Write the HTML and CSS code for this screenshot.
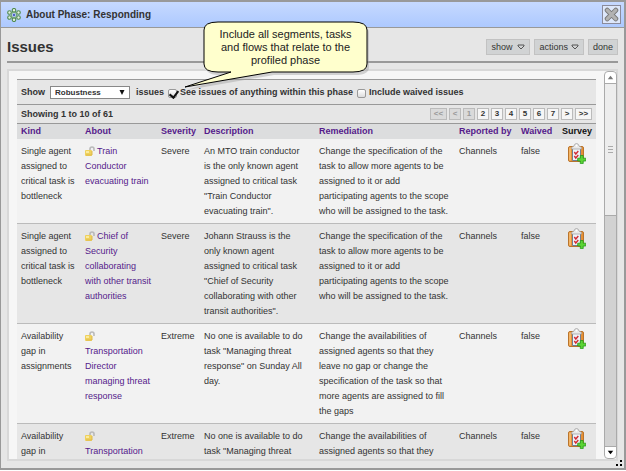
FILE: index.html
```
<!DOCTYPE html>
<html lang="en">
<head>
<meta charset="utf-8">
<title>About Phase: Responding</title>
<link rel="stylesheet" href="styles.css">
</head>
<body>
<svg class="defs" aria-hidden="true">
  <symbol id="lock" viewBox="0 0 10 10">
    <path d="M5 5V3q0-2 2-2t2 2v2" fill="none" stroke="#b9b9b9" stroke-width="1.6"/>
    <rect x="0" y="4" width="7" height="6" rx="1" fill="#efd15c"/>
    <path d="M1 5h3v2H1z" fill="#faeaa0"/>
    <path d="M1 9h6V5" fill="none" stroke="#ddb84a"/>
  </symbol>
  <symbol id="survey" viewBox="0 0 18 21">
    <rect x=".5" y="3.500" width="15" height="15" rx="1.500" fill="#e58f35" stroke="#b9742c"/>
    <path d="M2 4.500v13" stroke="#f9c277" stroke-width="1.500"/>
    <path d="M4.500 5h8v12.500h-8z" fill="#eef3f9" stroke="#6f7f93"/>
    <path d="M3.500 6V4.500L6 3q.5-2.500 2.500-2.500T11 3l2.500 1.500V6z" fill="#e9e9e9" stroke="#a5a5a5" stroke-width=".8"/>
    <circle cx="8.500" cy="2.700" r=".9" fill="#fff"/>
    <path d="M6.300 9l1.500 2L10.300 8M6.300 13l1.500 2 2.500-3" fill="none" stroke="#d32b35" stroke-width="1.400"/>
    <path d="M12.300 12.500h2.900v2.700h2.600V18h-2.600v2.600h-2.900V18H9.700v-2.800h2.600z" fill="#5bd435" stroke="#249b1b" stroke-width=".8"/>
  </symbol>
</svg>
<div class="window">
  <header class="titlebar">
    <svg class="app-icon" viewBox="0 0 14 14" aria-hidden="true">
      <g fill="#e3f0e0" stroke="#4f8a4d" stroke-width="1.100">
        <circle cx="7" cy="2.300" r="1.800"/><circle cx="11.500" cy="4.500" r="1.800"/><circle cx="11.500" cy="9.500" r="1.800"/>
        <circle cx="7" cy="11.700" r="1.800"/><circle cx="2.500" cy="9.500" r="1.800"/><circle cx="2.500" cy="4.500" r="1.800"/>
      </g>
      <circle cx="7" cy="7" r="2.800" fill="#b8cdec" stroke="#6ba36a"/>
      <circle cx="7" cy="7" r="1.200" fill="#4c5fc4"/>
    </svg>
    <span class="caption">About Phase: Responding</span>
    <button class="close" type="button" aria-label="Close">
      <svg viewBox="0 0 14 14" aria-hidden="true">
        <path d="M3 3l8 8M11 3l-8 8" stroke="#777" stroke-width="4.600" stroke-linecap="round"/>
        <path d="M3 3l8 8M11 3l-8 8" stroke="#b2b2b2" stroke-width="3" stroke-linecap="round"/>
      </svg>
    </button>
  </header>
  <main class="content">
    <div class="heading">
      <h1>Issues</h1>
      <div class="menus">
        <button type="button">show <svg class="down wide" viewBox="0 0 8 6" aria-hidden="true"><path d="M1 1h6v1L4 5 1 2z"/></svg></button>
        <button type="button">actions <svg class="down" viewBox="0 0 8 6" aria-hidden="true"><path d="M1 1h6v1L4 5 1 2z"/></svg></button>
        <button type="button">done</button>
      </div>
      <div class="callout" role="tooltip">
        <svg class="balloon" viewBox="0 0 230 76" aria-hidden="true">
          <path class="shadow" d="M57 2H192Q206 2 206 10V44Q206 52 192 52H111L24 67 70 52H57Q43 52 43 44V10Q43 2 57 2Z" transform="translate(2 3)"/>
          <path class="body" d="M57 2H192Q206 2 206 10V44Q206 52 192 52H111L24 67 70 52H57Q43 52 43 44V10Q43 2 57 2Z"/>
        </svg>
        <p>Include all segments, tasks<br>and flows that relate to the<br>profiled phase</p>
      </div>
    </div>
    <section class="panel">
      <div class="scroll">
        <form class="filters">
          <label for="kind">Show</label>
          <span class="picker">
            <select id="kind"><option>Robustness</option></select>
            <svg viewBox="0 0 6 6" aria-hidden="true"><path d="M0 0h6L3 6z"/></svg>
          </span>
          <span>issues</span>
          <input type="checkbox" id="within" checked><label for="within">See issues of anything within this phase</label>
          <input type="checkbox" id="waived"><label for="waived">Include waived issues</label>
        </form>
        <div class="paging">
          <span>Showing 1 to 10 of 61</span>
          <nav>
            <button type="button" class="far" disabled>&lt;&lt;</button><button type="button" disabled>&lt;</button><button type="button" disabled>1</button><button type="button">2</button><button type="button">3</button><button type="button">4</button><button type="button">5</button><button type="button">6</button><button type="button">7</button><button type="button">&gt;</button><button type="button" class="far">&gt;&gt;</button>
          </nav>
        </div>
        <table>
          <colgroup><col class="c-kind"><col class="c-about"><col class="c-severity"><col class="c-description"><col><col class="c-reported"><col class="c-waived"><col class="c-survey"></colgroup>
          <thead>
            <tr><th><a href="#">Kind</a></th><th><a href="#">About</a></th><th><a href="#">Severity</a></th><th><a href="#">Description</a></th><th><a href="#">Remediation</a></th><th><a href="#">Reported by</a></th><th><a href="#">Waived</a></th><th>Survey</th></tr>
          </thead>
          <tbody>
            <tr>
              <td>Single agent<br>assigned to<br>critical task is<br>bottleneck</td>
              <td><svg class="lock"><use href="#lock"/></svg><a href="#">Train<br>Conductor<br>evacuating train</a></td>
              <td>Severe</td>
              <td>An MTO train conductor<br>is the only known agent<br>assigned to critical task<br>"Train Conductor<br>evacuating train".</td>
              <td>Change the specification of the<br>task to allow more agents to be<br>assigned to it or add<br>participating agents to the scope<br>who will be assigned to the task.</td>
              <td>Channels</td><td>false</td>
              <td class="survey"><a href="#" aria-label="Survey"><svg><use href="#survey"/></svg></a></td>
            </tr>
            <tr>
              <td>Single agent<br>assigned to<br>critical task is<br>bottleneck</td>
              <td><svg class="lock"><use href="#lock"/></svg><a href="#">Chief of<br>Security<br>collaborating<br>with other transit<br>authorities</a></td>
              <td>Severe</td>
              <td>Johann Strauss is the<br>only known agent<br>assigned to critical task<br>"Chief of Security<br>collaborating with other<br>transit authorities".</td>
              <td>Change the specification of the<br>task to allow more agents to be<br>assigned to it or add<br>participating agents to the scope<br>who will be assigned to the task.</td>
              <td>Channels</td><td>false</td>
              <td class="survey"><a href="#" aria-label="Survey"><svg><use href="#survey"/></svg></a></td>
            </tr>
            <tr>
              <td>Availability<br>gap in<br>assignments</td>
              <td><svg class="lock"><use href="#lock"/></svg><br><a href="#">Transportation<br>Director<br>managing threat<br>response</a></td>
              <td>Extreme</td>
              <td>No one is available to do<br>task "Managing threat<br>response" on Sunday All<br>day.</td>
              <td>Change the availabilities of<br>assigned agents so that they<br>leave no gap or change the<br>specification of the task so that<br>more agents are assigned to fill<br>the gaps</td>
              <td>Channels</td><td>false</td>
              <td class="survey"><a href="#" aria-label="Survey"><svg><use href="#survey"/></svg></a></td>
            </tr>
            <tr>
              <td>Availability<br>gap in</td>
              <td><svg class="lock"><use href="#lock"/></svg><br><a href="#">Transportation</a></td>
              <td>Extreme</td>
              <td>No one is available to do<br>task "Managing threat</td>
              <td>Change the availabilities of<br>assigned agents so that they</td>
              <td>Channels</td><td>false</td>
              <td class="survey"><a href="#" aria-label="Survey"><svg><use href="#survey"/></svg></a></td>
            </tr>
          </tbody>
        </table>
      </div>
      <div class="scrollbar" aria-hidden="true">
        <svg class="up" viewBox="0 0 12 12"><path d="M3 8h6L6 4z"/></svg>
        <div class="thumb"><i></i><i></i><i></i></div>
        <div class="track"></div>
        <svg class="dn" viewBox="0 0 12 12"><path d="M3 4h6L6 8z"/></svg>
      </div>
    </section>
  </main>
  <svg class="grip" viewBox="0 0 6 6" aria-hidden="true"><path d="M4 0h2v2H4zM0 4h2v2H0zM4 4h2v2H4z"/></svg>
</div>
</body>
</html>
```
FILE: styles.css
```
* { box-sizing: border-box; }
body { margin: 0; background: #fff; font: 9px/15px "Liberation Sans", Arial, sans-serif; color: #333; }
button, input, select { font: inherit; color: inherit; margin: 0; }
a { color: #551a8b; text-decoration: none; }
.defs { position: absolute; width: 0; height: 0; }

.window {
  position: relative;
  display: flex;
  flex-direction: column;
  height: calc(100vh - 1px);
  border: 2px solid #999;
  border-left-width: 1px;
  background: #e6e6e6;
}
.titlebar {
  display: flex;
  flex: none;
  align-items: center;
  height: 26px;
  padding: 0 3px 0 6px;
  gap: 5px;
  background: linear-gradient(#c6d9ff, #adc9ff);
  border-bottom: 1px solid #999;
}
.app-icon { width: 14px; height: 14px; }
.caption { flex: 1; font-size: 10px; font-weight: bold; }
.close { width: 19px; height: 19px; padding: 1px; border: 1px solid #8b8b9b; background: #dde7fb; }
.close svg { display: block; width: 15px; height: 15px; }

.content { display: flex; flex-direction: column; flex: 1; min-height: 0; padding: 0 6px 7px; }
.heading {
  position: relative;
  display: flex;
  flex: none;
  justify-content: space-between;
  align-items: center;
  height: 35px;
  padding-top: 5px;
  border-bottom: 2px solid #999;
}
h1 { margin: 0; font-size: 15px; line-height: 20px; }
.menus { display: flex; gap: 4px; }
.menus button {
  display: flex;
  align-items: center;
  gap: 3px;
  height: 16px;
  padding: 0 4px;
  border: 1px solid #c2c2c2;
  background: #d1d3d4;
  font-size: 9px;
}
.down { width: 8px; height: 6px; fill: none; stroke: #555; }
.down.wide { margin-left: 2px; }

.callout { position: absolute; z-index: 2; left: 154px; top: -8px; width: 230px; height: 76px; }
.balloon { position: absolute; inset: 0; width: 100%; height: 100%; }
.balloon .body { fill: #ffffcd; stroke: #000; }
.balloon .shadow { fill: #999; fill-opacity: .4; }
.callout p { position: relative; margin: 8px 24px 0 43px; font-size: 11px; line-height: 13px; text-align: center; color: #222; }

.panel { display: flex; flex: 1; min-height: 0; margin-top: 6px; border: 2px solid #d8d8d8; background: #f6f6f6; }
.scroll { flex: 1; min-width: 0; overflow: hidden; padding: 8px 8px 0; }
.filters, .paging {
  display: flex;
  align-items: center;
  padding: 0 4px;
  border-top: 1px solid #999;
  background: #e6e6e6;
  font-size: 9px;
  font-weight: bold;
}
.filters { height: 25px; }
.picker { position: relative; display: flex; margin: 0 6px 0 5px; }
.picker select { appearance: none; width: 80px; height: 13px; padding: 0 4px; border: 1px solid #888; border-radius: 0; background: #fff; font-size: 8px; line-height: 11px; }
.picker svg { position: absolute; right: 5px; top: 4px; width: 6px; height: 5px; fill: #111; }
.filters input {
  appearance: none;
  display: grid;
  width: 9px;
  height: 9px;
  margin: 2px 3px 0 4px;
  border: 1px solid #999;
  border-radius: 2px;
  background: linear-gradient(#fff, #ddd);
}
.filters input:checked::after { content: ""; width: 4px; height: 7px; margin: -1px 0 0 2px; border: solid #111; border-width: 0 2px 2px 0; transform: rotate(38deg); }
.paging { justify-content: space-between; height: 19px; }
.paging nav { display: flex; gap: 2px; }
.paging button { width: 12px; height: 12px; padding: 0; border: 1px solid #bbb; background: #f6f6f6; font-size: 8px; line-height: 10px; text-align: center; }
.paging .far { width: 17px; }
.paging button:disabled { background: #dadada; color: #999; }

table { width: 100%; table-layout: fixed; border-collapse: separate; border-spacing: 0; border-top: 1px solid #999; }
.c-kind { width: 64px; }
.c-about { width: 76px; }
.c-severity { width: 43px; }
.c-description { width: 115px; }
.c-reported { width: 62px; }
.c-waived { width: 41px; }
.c-survey { width: 38px; }
th, td { padding: 0 4px; text-align: left; vertical-align: top; white-space: nowrap; }
th { background: #dcddde; color: #111; }
td { padding: 5px 4px 4px; border-bottom: 1px solid #bbb; background: #f2f2f2; }
tr:nth-child(even) td { background: #e6e6e6; }
.lock { width: 10px; height: 10px; margin-right: 2px; vertical-align: -2px; }
.survey { padding-top: 4px; }
.survey svg { display: block; width: 18px; height: 21px; margin-left: 6px; }

.scrollbar { display: flex; flex-direction: column; width: 13px; margin-right: -1px; border: 1px solid #aaa; border-radius: 4px; background: #fff; }
.scrollbar > svg { flex: none; width: 11px; height: 11px; }
.up { fill: #777; }
.dn { fill: #000; }
.thumb { display: flex; flex-direction: column; justify-content: center; align-items: center; gap: 2px; flex: 34; border: solid #aaa; border-width: 1px 0; background: #ededed; }
.thumb i { width: 5px; height: 1px; background: #aaa; }
.track { flex: 60; background: #d2d2d2; border-bottom: 1px solid #aaa; }
.grip { position: absolute; right: 2px; bottom: 2px; width: 6px; height: 6px; }
```
